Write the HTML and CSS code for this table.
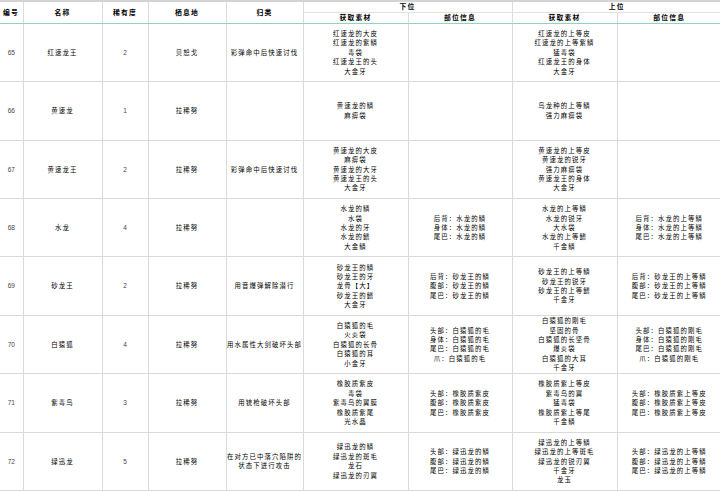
FILE: index.html
```html
<!DOCTYPE html>
<html lang="zh">
<head>
<meta charset="utf-8">
<link rel="stylesheet" href="styles.css">
</head>
<body>
<div class="topbar"></div>
<table class="mh">
<colgroup>
<col class="c-id"><col class="c-name"><col class="c-rare"><col class="c-hab"><col class="c-cat">
<col class="c-mat"><col class="c-part"><col class="c-mat"><col class="c-part2">
</colgroup>
<thead>
<tr class="h1">
<th rowspan="2" class="left">编号</th>
<th rowspan="2">名称</th>
<th rowspan="2">稀有度</th>
<th rowspan="2">栖息地</th>
<th rowspan="2">归类</th>
<th colspan="2">下位</th>
<th colspan="2">上位</th>
</tr>
<tr class="h2">
<th>获取素材</th><th>部位信息</th><th>获取素材</th><th>部位信息</th>
</tr>
</thead>
<tbody>
<tr>
<td class="num">65</td><td>红速龙王</td><td class="num">2</td><td>贝恕戈</td><td>彩弹命中后快速讨伐</td>
<td>红速龙的大皮<br>红速龙的紫鳞<br>毒袋<br>红速龙王的头<br>大金牙</td>
<td></td>
<td>红速龙的上等皮<br>红速龙的上等紫鳞<br>猛毒袋<br>红速龙王的身体<br>大金牙</td>
<td></td>
</tr>
<tr>
<td class="num">66</td><td>黄速龙</td><td class="num">1</td><td>拉稀努</td><td></td>
<td>黄速龙的鳞<br>麻痹袋</td>
<td></td>
<td>鸟龙种的上等鳞<br>强力麻痹袋</td>
<td></td>
</tr>
<tr>
<td class="num">67</td><td>黄速龙王</td><td class="num">2</td><td>拉稀努</td><td>彩弹命中后快速讨伐</td>
<td>黄速龙的大皮<br>麻痹袋<br>黄速龙的大牙<br>黄速龙王的头<br>大金牙</td>
<td></td>
<td>黄速龙的上等皮<br>黄速龙的锐牙<br>强力麻痹袋<br>黄速龙王的身体<br>大金牙</td>
<td></td>
</tr>
<tr>
<td class="num">68</td><td>水龙</td><td class="num">4</td><td>拉稀努</td><td></td>
<td>水龙的鳞<br>水袋<br>水龙的牙<br>水龙的鳍<br>大金鳞</td>
<td>后背：水龙的鳞<br>身体：水龙的鳞<br>尾巴：水龙的鳞</td>
<td>水龙的上等鳞<br>水龙的锐牙<br>大水袋<br>水龙的上等鳍<br>千金鳞</td>
<td>后背：水龙的上等鳞<br>身体：水龙的上等鳞<br>尾巴：水龙的上等鳞</td>
</tr>
<tr>
<td class="num">69</td><td>砂龙王</td><td class="num">2</td><td>拉稀努</td><td>用音爆弹解除潜行</td>
<td>砂龙王的鳞<br>砂龙王的牙<br>龙骨【大】<br>砂龙王的鳍<br>大金牙</td>
<td>后背：砂龙王的鳞<br>腹部：砂龙王的鳞<br>尾巴：砂龙王的鳞</td>
<td>砂龙王的上等鳞<br>砂龙王的锐牙<br>砂龙王的上等鳍<br>千金牙</td>
<td>后背：砂龙王的上等鳞<br>腹部：砂龙王的上等鳞<br>尾巴：砂龙王的上等鳞</td>
</tr>
<tr>
<td class="num">70</td><td>白猿狐</td><td class="num">4</td><td>拉稀努</td><td>用水属性大剑破坏头部</td>
<td>白猿狐的毛<br>火炎袋<br>白猿狐的长骨<br>白猿狐的耳<br>小金牙</td>
<td>头部：白猿狐的毛<br>身体：白猿狐的毛<br>尾巴：白猿狐的毛<br>爪：白猿狐的毛</td>
<td>白猿狐的刚毛<br>坚固的骨<br>白猿狐的长坚骨<br>爆炎袋<br>白猿狐的大耳<br>千金牙</td>
<td>头部：白猿狐的刚毛<br>身体：白猿狐的刚毛<br>尾巴：白猿狐的刚毛<br>爪：白猿狐的刚毛</td>
</tr>
<tr>
<td class="num">71</td><td>紫毒鸟</td><td class="num">3</td><td>拉稀努</td><td>用铳枪破坏头部</td>
<td>橡胶质紫皮<br>毒袋<br>紫毒鸟的翼膜<br>橡胶质紫尾<br>光水晶</td>
<td>头部：橡胶质紫皮<br>腹部：橡胶质紫皮<br>尾巴：橡胶质紫皮</td>
<td>橡胶质紫上等皮<br>紫毒鸟的翼<br>猛毒袋<br>橡胶质紫上等尾<br>千金鳞</td>
<td>头部：橡胶质紫上等皮<br>腹部：橡胶质紫上等皮<br>尾巴：橡胶质紫上等皮</td>
</tr>
<tr>
<td class="num">72</td><td>绿迅龙</td><td class="num">5</td><td>拉稀努</td><td>在对方已中落穴陷阱的<br>状态下进行攻击</td>
<td>绿迅龙的鳞<br>绿迅龙的斑毛<br>龙石<br>绿迅龙的刃翼</td>
<td>头部：绿迅龙的鳞<br>腹部：绿迅龙的鳞<br>尾巴：绿迅龙的鳞</td>
<td>绿迅龙的上等鳞<br>绿迅龙的上等斑毛<br>绿迅龙的锐刃翼<br>千金牙<br>龙玉</td>
<td>头部：绿迅龙的上等鳞<br>腹部：绿迅龙的上等鳞<br>尾巴：绿迅龙的上等鳞</td>
</tr>
</tbody>
</table>
</body>
</html>
```

FILE: styles.css
```css
html, body {
  margin: 0;
  padding: 0;
  background: #ffffff;
}
body {
  width: 720px;
  height: 491px;
  overflow: hidden;
  font-family: "Noto Sans CJK SC", "Noto Sans", sans-serif;
  color: #111;
}
.topbar {
  height: 2px;
  background: #d4d4d4;
}
.mh {
  width: 720px;
  table-layout: fixed;
  border-collapse: collapse;
}
.c-id { width: 23px; }
.c-name { width: 79px; }
.c-rare { width: 46px; }
.c-hab { width: 78px; }
.c-cat { width: 77px; }
.c-mat { width: 105px; }
.c-part { width: 104px; }
.c-part2 { width: 104px; }

.mh th {
  font-size: 6.8px;
  letter-spacing: 1.2px;
  font-weight: 700;
  line-height: 9.8px;
  padding: 0;
  text-align: center;
  border-left: 1px solid #dcdcdc;
  border-right: 1px solid #dcdcdc;
  border-bottom: 1px solid #e2e2e2;
  color: #000;
}
.mh th.left {
  text-align: left;
  padding-left: 3px;
  border-left: none;
}
.mh tr.h1 th { height: 8px; }
.mh tr.h2 th { height: 10px; }
.mh thead tr.h2 th,
.mh thead tr.h1 th[rowspan] {
  border-bottom: 1px solid #8fd3c4;
}
.mh td {
  font-size: 6.4px;
  letter-spacing: 1.1px;
  line-height: 9.4px;
  height: 57.4px;
  padding: 0;
  text-align: center;
  vertical-align: middle;
  border: 1px solid #dadada;
  white-space: nowrap;
  overflow: hidden;
  color: #000;
}
.mh td:first-child { border-left: none; }
.mh td:last-child, .mh th:last-child { border-right: none; }
.mh td.num {
  font-family: "Liberation Sans", Arial, sans-serif;
  font-size: 6.5px;
  letter-spacing: 0;
  color: #444;
}
```
